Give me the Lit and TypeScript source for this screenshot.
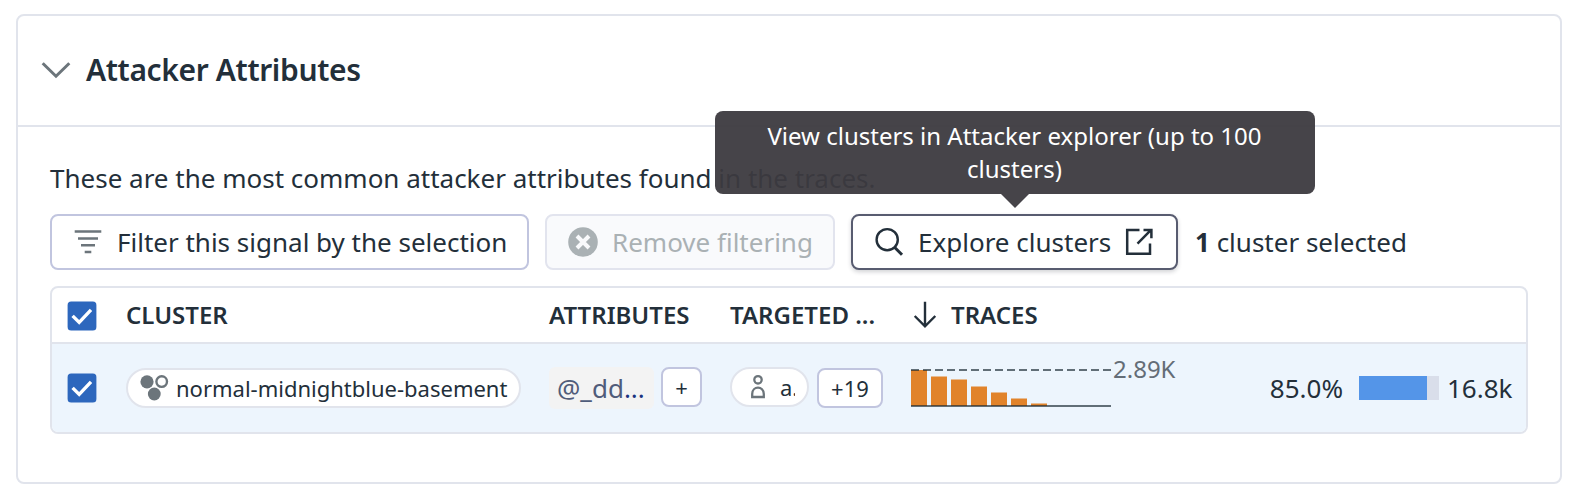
import { LitElement, html, css, svg } from "lit";
import { customElement, property } from "lit/decorators.js";

const BAR_TOPS = [0, 6.5, 9.5, 16.5, 22.5, 28.5, 33.5];

@customElement("check-box")
class CheckBox extends LitElement {
  static styles = css`
    :host { display: block; width: 30px; height: 30px; }
    svg { display: block; }
  `;
  render() {
    return html`<svg width="30" height="30" viewBox="0 0 30 30">
      <rect x="0.6" y="0.6" width="28.8" height="28.8" rx="3.5" fill="#2d67bd"></rect>
      <path d="M5.6 14.9 L12.2 21.4 L24 8.9" fill="none" stroke="#fff" stroke-width="3.4"></path>
    </svg>`;
  }
}

@customElement("trace-sparkline")
class TraceSparkline extends LitElement {
  @property({ type: Array }) tops: number[] = [];
  static styles = css`
    :host { display: block; }
    svg { display: block; }
  `;
  render() {
    return html`<svg width="200" height="38" viewBox="0 0 200 38">
      ${this.tops.map((t, i) => svg`<rect x=${i * 20} y=${t + 1} width="16" height=${36 - t} fill="#e1832b"></rect>`)}
      <path d="M0 1H200" stroke="#1c2b34" stroke-opacity=".67" stroke-width="2" stroke-dasharray="8 4"></path>
      <path d="M0 37H200" stroke="#1c2b34" stroke-opacity=".67" stroke-width="2"></path>
    </svg>`;
  }
}

@customElement("app-root")
class AppRoot extends LitElement {
  static styles = css`
    :host {
      display: block;
      box-sizing: border-box;
      height: 500px;
      padding: 14px 16px 16px;
      background: #fff;
      color: #232f3a;
      font-family: "Noto Sans", sans-serif;
      font-size: 26px;
      line-height: 36px;
      white-space: nowrap;
      overflow: hidden;
    }
    * { box-sizing: border-box; }
    svg { display: block; flex: none; }
    .panel { height: 470px; border: 2px solid #e1e4ec; border-radius: 8px; }
    .head {
      height: 111px; border-bottom: 2px solid #e1e4ec;
      display: flex; align-items: center; padding-left: 23px; gap: 15px;
    }
    .title { font-size: 30px; font-weight: 600; letter-spacing: -0.37px; line-height: 40px; padding-bottom: 2px; }
    .body { padding: 33px 32px 0; }
    .intro { height: 36px; }
    .actions { display: flex; align-items: center; gap: 16px; margin-top: 18px; }
    .btn {
      height: 56px; border: 2px solid #c1c5df; border-radius: 8px; background: #fff;
      display: flex; align-items: center; padding: 0 20px 0 22px; flex: none;
    }
    .filter { width: 479px; gap: 15px; }
    .remove { width: 290px; gap: 14px; padding-left: 21px; background: #f9fafc; border-color: #e2e4ee; color: #aab1b4; }
    .explore {
      width: 327px; gap: 14px; border-color: #585c70; position: relative;
      box-shadow: 0 2px 4px rgba(30, 35, 50, .2);
    }
    .selected { padding-left: 1px; }
    .tip {
      position: absolute; left: 50%; bottom: 74px; width: 600px; height: 83px; margin-left: -300px;
      border-radius: 8px; background: rgba(60, 58, 63, .95); color: #fff;
      font-size: 24px; line-height: 33px; text-align: center; white-space: normal; padding: 8px 48px 0;
    }
    .tip::after {
      content: ""; position: absolute; left: 286px; top: 100%;
      border: 14px solid transparent; border-top-color: rgba(60, 58, 63, .95); border-bottom-width: 0;
    }
    .table {
      margin-top: 16px; height: 148px; width: 1478px;
      border: 2px solid #e1e4ec; border-radius: 8px; overflow: hidden;
    }
    .row {
      display: grid; align-items: center; padding-left: 15px;
      grid-template-columns: 59px 423px 181px 181px 1fr;
    }
    .hrow { height: 56px; border-bottom: 2px solid #e1e4ec; font-size: 24px; font-weight: 600; }
    .hrow check-box { margin-top: 2px; }
    .drow { height: 88px; background: #edf5fd; }
    .sort { display: flex; align-items: center; gap: 14px; }
    .cell { display: flex; align-items: center; }
    .pill {
      height: 40px; border: 2px solid #e1e4ec; border-radius: 20px; background: #fff;
      display: flex; align-items: center; font-size: 22px;
    }
    .cluster { width: 395px; padding-left: 12px; gap: 7px; }
    .user { width: 79px; padding-left: 18px; gap: 14px; margin-bottom: 2px; }
    .name { width: 15px; overflow: hidden; }
    .mini {
      height: 40px; border: 2px solid #c1c5df; border-radius: 8px; background: #fff;
      display: flex; align-items: center; justify-content: center; font-size: 22px;
    }
    .plus { width: 41px; margin-left: 7px; margin-bottom: 2px; padding-bottom: 0; }
    .more { width: 66px; margin-left: 8px; }
    .attr {
      width: 105px; height: 42px; border-radius: 6px; background: #f3f3f3; color: #505c7a;
      display: flex; align-items: center; padding-left: 8px;
    }
    .dots { color: #1b3380; }
    .max { color: #646d77; font-size: 24px; margin-left: 2px; margin-top: -38px; }
    .traces { display: flex; align-items: center; }
    .pct { margin-left: auto; }
    .meter { width: 80px; height: 24px; background: #d9deea; margin: 0 8px 0 16px; }
    .fill { height: 100%; background: #5495e8; }
    .count { width: 79px; }
  `;

  render() {
    return html`
      <section class="panel">
        <div class="head">
          <svg width="30" height="20" viewBox="0 0 30 20"><path d="M1.7 2.2 L15 15.2 L28.3 2.2" fill="none" stroke="#6c757b" stroke-width="3"></path></svg>
          <div class="title">Attacker Attributes</div>
        </div>
        <div class="body">
          <div class="intro">These are the most common attacker attributes found in the traces.</div>
          <div class="actions">
            <div class="btn filter">
              <svg width="28" height="24" viewBox="0 0 28 24"><path d="M0.7 1.5H27.3M4 8.5H24M7 15.3H21M10.7 22H17.3" stroke="#6c757b" stroke-width="2.6"></path></svg>
              <span>Filter this signal by the selection</span>
            </div>
            <div class="btn remove">
              <svg width="30" height="30" viewBox="0 0 30 30"><circle cx="15" cy="15" r="14.8" fill="#aab1b4"></circle><path d="M9 9L21 21M21 9L9 21" stroke="#f9fafc" stroke-width="4"></path></svg>
              <span>Remove filtering</span>
            </div>
            <div class="btn explore">
              <svg width="29" height="30" viewBox="0 0 29 30"><g fill="none" stroke="#232f3a"><circle cx="12.2" cy="12.7" r="10.6" stroke-width="2.4"></circle><path d="M19.5 20.3L27 27.8" stroke-width="3"></path></g></svg>
              <span>Explore clusters</span>
              <svg width="28" height="28" viewBox="0 0 28 28"><path d="M14.5 2H2.2V25.8H25V15.5M18.5 2H26.4V10.2M25.8 2.2L12.5 15.7" fill="none" stroke="#232f3a" stroke-width="2.5"></path></svg>
              <div class="tip">View clusters in Attacker explorer (up to 100 clusters)</div>
            </div>
            <div class="selected"><b>1</b> cluster selected</div>
          </div>
          <div class="table">
            <div class="row hrow">
              <check-box></check-box>
              <div>CLUSTER</div>
              <div>ATTRIBUTES</div>
              <div>TARGETED ...</div>
              <div class="sort">
                <svg width="26" height="28" viewBox="0 0 26 28"><path d="M14 0.7V25M3.7 15L14 25.3L24.3 15" fill="none" stroke="#232f3a" stroke-width="2.4"></path></svg>
                <span>TRACES</span>
              </div>
            </div>
            <div class="row drow">
              <check-box></check-box>
              <div class="cell"><div class="pill cluster">
                <svg width="29" height="28" viewBox="0 0 29 28"><circle cx="7" cy="7.8" r="6.6" fill="#6c757b"></circle><circle cx="14.3" cy="20" r="6.4" fill="#6c757b"></circle><circle cx="21.7" cy="7.6" r="5.3" fill="none" stroke="#6c757b" stroke-width="2.4"></circle></svg>
                <span>normal-midnightblue-basement</span>
              </div></div>
              <div class="cell">
                <div class="attr">@_dd<span class="dots">...</span></div>
                <div class="mini plus">+</div>
              </div>
              <div class="cell">
                <div class="pill user">
                  <svg width="16" height="26" viewBox="0 0 16 26"><g fill="none" stroke="#6c757b" stroke-width="2.3"><circle cx="8" cy="5.8" r="3.7"></circle><path d="M2.2 23V20C2.2 11.6 13.8 11.6 13.8 20V23Z"></path></g></svg>
                  <span class="name">a.</span>
                </div>
                <div class="mini more">+19</div>
              </div>
              <div class="traces">
                <trace-sparkline .tops=${BAR_TOPS}></trace-sparkline>
                <span class="max">2.89K</span>
                <span class="pct">85.0%</span>
                <div class="meter"><div class="fill" style="width:85%"></div></div>
                <span class="count">16.8k</span>
              </div>
            </div>
          </div>
        </div>
      </section>
    `;
  }
}
